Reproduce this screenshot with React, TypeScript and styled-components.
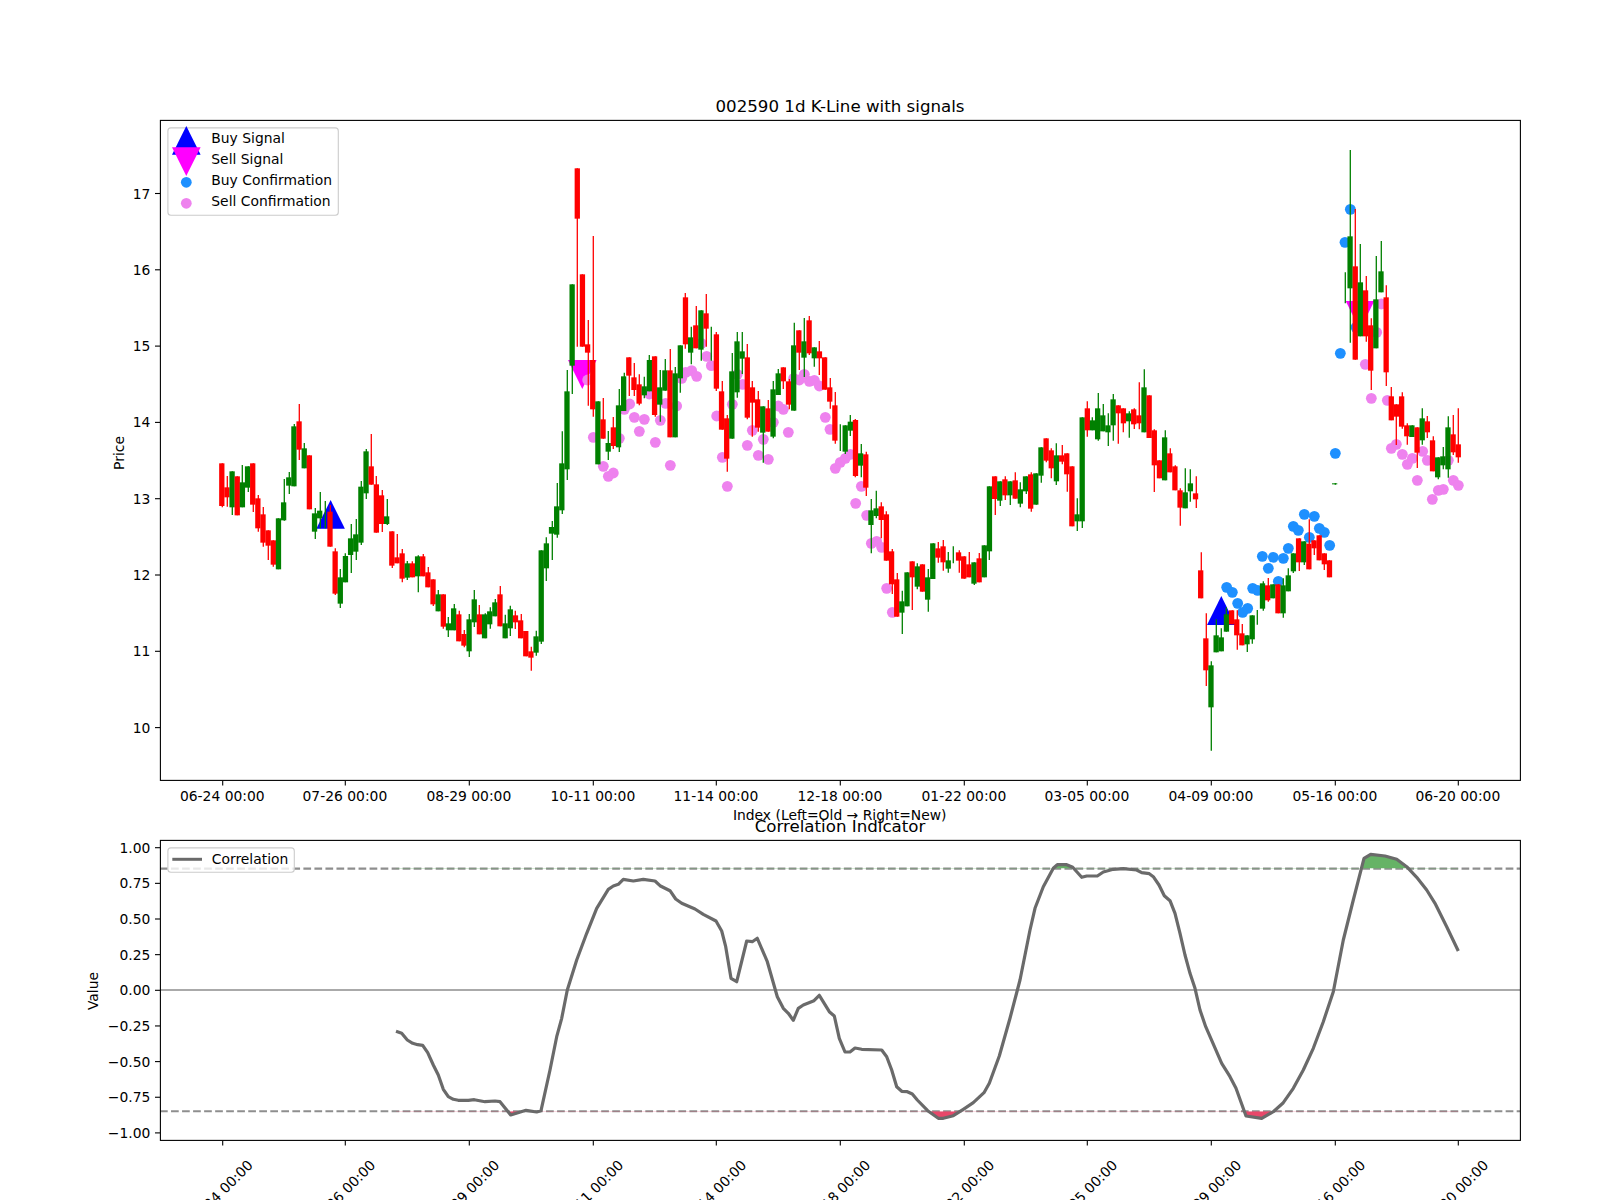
import styled, { createGlobalStyle } from "styled-components";

type Candle = { up: boolean; wt: number; bt: number; bb: number; wb: number };
type Row = [boolean, number, number, number, number];
type Pt = [number, number];

const GlobalStyle = createGlobalStyle`
  html, body {
    margin: 0;
    padding: 0;
    background: #ffffff;
    overflow: hidden;
  }
`;

const Page = styled.div`
  width: 1600px;
  height: 1200px;
  background: #ffffff;
`;

const Figure = styled.svg`
  display: block;
  width: 1600px;
  height: 1200px;
  font-family: "DejaVu Sans", "Liberation Sans", sans-serif;
`;

const Spine = styled.rect`
  fill: none;
  stroke: #000000;
  stroke-width: 1.1;
`;

const Tick = styled.line`
  stroke: #000000;
  stroke-width: 1.1;
`;

const TickLabel = styled.text<{ $anchor?: string }>`
  font-size: 13.89px;
  fill: #000000;
  text-anchor: ${(p) => p.$anchor ?? "middle"};
`;

const RotatedLabel = styled.text`
  font-size: 13.89px;
  fill: #000000;
  text-anchor: middle;
  dominant-baseline: central;
`;

const AxisLabel = styled.text`
  font-size: 13.89px;
  fill: #000000;
  text-anchor: middle;
`;

const Title = styled.text`
  font-size: 16.67px;
  fill: #000000;
  text-anchor: middle;
`;

const Wick = styled.line<{ $up: boolean }>`
  stroke: ${(p) => (p.$up ? "#008000" : "#ff0000")};
  stroke-width: 1.3;
`;

const Body = styled.rect<{ $up: boolean }>`
  fill: ${(p) => (p.$up ? "#008000" : "#ff0000")};
`;

const Marker = styled.polygon<{ $color: string }>`
  fill: ${(p) => p.$color};
`;

const Dot = styled.circle<{ $color: string }>`
  fill: ${(p) => p.$color};
`;

const LegendBox = styled.rect`
  fill: rgba(255, 255, 255, 0.8);
  stroke: #cccccc;
  stroke-width: 1.1;
`;

const LegendText = styled.text`
  font-size: 13.89px;
  fill: #000000;
`;

const RefLine = styled.line<{ $dashed?: boolean }>`
  stroke: ${(p) => (p.$dashed ? "#8e8e8e" : "#aaaaaa")};
  stroke-width: 2.08;
  stroke-dasharray: ${(p) => (p.$dashed ? "7.7 3.33" : "none")};
`;

const CorrelationLine = styled.polyline`
  fill: none;
  stroke: #6a6a6a;
  stroke-width: 3.2;
  stroke-linejoin: round;
`;

const LegendSample = styled.line`
  stroke: #6a6a6a;
  stroke-width: 3;
`;

const Fill = styled.polygon<{ $color: string }>`
  fill: ${(p) => p.$color};
`;

const R = (wt: number, bt: number, bb: number, wb: number): Row => [false, wt, bt, bb, wb];
const G = (wt: number, bt: number, bb: number, wb: number): Row => [true, wt, bt, bb, wb];

// price data is kept as read from the chart: y0 + value / 3 gives the pixel row
const sections: { from: number; y0: number; rows: Row[] }[] = [
  {
    from: 0,
    y0: 400,
    rows: [
      R(190, 190, 318, 322), R(228, 262, 292, 320), G(214, 214, 322, 345), R(229, 229, 346, 346),
      G(195, 247, 322, 322), G(199, 199, 263, 276), R(190, 190, 314, 336), R(285, 295, 385, 395),
      R(321, 343, 428, 440), R(391, 391, 437, 480), R(421, 421, 494, 500), G(355, 355, 508, 508),
      G(237, 307, 361, 362), G(216, 232, 257, 282), G(72, 79, 259, 259), R(12, 64, 149, 180),
      G(129, 145, 205, 205), R(166, 166, 328, 328), G(324, 340, 395, 417), G(276, 332, 355, 385),
      G(303, 345, 345, 385), R(315, 335, 440, 440), R(445, 454, 581, 585), G(507, 532, 611, 624),
      G(460, 468, 547, 547), G(372, 415, 465, 519), G(357, 403, 455, 480), G(243, 260, 428, 435),
      G(147, 154, 280, 297), R(102, 199, 254, 254), R(228, 253, 398, 398), R(270, 286, 372, 396),
      G(297, 349, 372, 375), R(394, 394, 497, 504), R(402, 472, 490, 490), R(447, 460, 536, 547),
      G(483, 490, 533, 540), R(484, 490, 532, 532), G(466, 469, 529, 577), R(462, 469, 529, 529),
      R(501, 517, 562, 562), R(538, 538, 613, 618), G(570, 583, 634, 634), R(583, 583, 680, 686),
      G(651, 670, 691, 711), G(612, 625, 691, 691), R(632, 643, 724, 724), R(690, 702, 737, 742),
      G(642, 658, 754, 771), G(570, 598, 667, 681), R(615, 643, 703, 703), G(640, 643, 715, 715),
      G(622, 634, 673, 686), G(597, 607, 649, 649), R(558, 583, 679, 679), G(644, 670, 715, 715),
      G(617, 628, 685, 708), R(632, 646, 667, 687), R(642, 661, 715, 715), R(693, 693, 769, 769),
      R(740, 754, 773, 812), G(692, 709, 758, 767), G(451, 451, 725, 732), G(412, 430, 505, 543),
      G(363, 381, 401, 480), G(249, 319, 404, 413), G(94, 190, 331, 342),
    ],
  },
  {
    from: 67,
    y0: 130,
    rows: [
      G(720, 784, 1018, 1050), G(463, 463, 707, 792), R(115, 115, 266, 650), R(433, 433, 650, 650),
      R(570, 643, 668, 827), R(318, 690, 838, 860), G(814, 814, 1003, 1003), R(804, 868, 926, 926),
      G(903, 939, 965, 990), R(861, 892, 948, 957), G(777, 826, 952, 966), G(728, 739, 843, 843),
      R(682, 682, 737, 798), R(699, 742, 780, 798), R(733, 763, 821, 826), G(740, 769, 796, 805),
      G(675, 690, 784, 784), R(679, 679, 855, 860), G(720, 772, 824, 875), G(687, 721, 782, 782),
      R(657, 721, 922, 922), G(711, 730, 922, 922), G(646, 646, 745, 788), R(489, 502, 643, 656),
      G(590, 622, 668, 703), R(528, 586, 655, 655), G(541, 541, 659, 692), R(492, 550, 596, 650),
      G(590, 641, 641, 692), R(606, 613, 776, 783), R(753, 784, 899, 899), R(855, 865, 986, 1025),
      G(669, 724, 926, 926), G(606, 634, 787, 803), G(606, 664, 686, 732), R(642, 682, 863, 868),
      R(753, 772, 818, 920), R(783, 808, 893, 905), G(829, 829, 908, 998), R(810, 835, 905, 905),
      G(753, 778, 920, 925), G(717, 730, 795, 795), R(712, 712, 754, 777), R(747, 754, 824, 838),
      G(578, 646, 842, 842), R(601, 601, 668, 720), G(564, 634, 683, 741), R(558, 571, 670, 675),
      G(652, 652, 685, 710), R(633, 664, 685, 735), R(682, 682, 779, 779), R(744, 772, 815, 836),
      R(786, 826, 932, 941), G(883, 920, 920, 963), G(886, 886, 965, 972), G(855, 875, 902, 918),
      R(867, 870, 1038, 1042),
    ],
  },
  {
    from: 124,
    y0: 400,
    rows: [
      G(132, 160, 197, 232), R(155, 163, 263, 288), G(297, 331, 375, 460), G(272, 325, 348, 355),
      R(307, 319, 360, 415), R(334, 343, 482, 482), R(447, 454, 553, 582), R(519, 538, 650, 650),
      G(572, 604, 638, 702),
    ],
  },
  {
    from: 133,
    y0: 370,
    rows: [
      G(607, 607, 709, 709), R(574, 574, 622, 720), G(580, 589, 650, 658), R(583, 583, 665, 665),
      G(597, 622, 689, 725), G(520, 520, 627, 627), R(516, 535, 563, 578), R(510, 529, 577, 602),
      G(546, 571, 596, 608), G(529, 555, 555, 580), R(541, 547, 572, 608), R(559, 559, 626, 626),
      R(546, 583, 622, 622), G(577, 577, 641, 645), R(549, 565, 637, 637), G(526, 526, 622, 622),
      G(349, 349, 544, 570), R(319, 319, 387, 435), G(334, 334, 392, 408), R(319, 328, 376, 390),
      G(334, 334, 376, 405), R(307, 331, 386, 386), G(337, 358, 401, 412), G(319, 319, 364, 372),
      R(307, 313, 416, 425), G(310, 310, 404, 404), G(232, 232, 317, 338), R(205, 205, 272, 277),
      R(235, 241, 295, 325), G(220, 256, 334, 345), R(225, 256, 275, 283), R(250, 250, 313, 365),
      R(289, 289, 469, 469), G(385, 433, 454, 483), G(142, 142, 454, 474), R(94, 115, 181, 200),
      G(142, 151, 181, 181), G(69, 115, 208, 212), G(102, 136, 184, 184), G(130, 166, 187, 228),
      G(72, 88, 166, 212), R(106, 106, 130, 221), R(115, 115, 160, 187), G(124, 130, 154, 203),
      R(115, 118, 163, 177), R(37, 136, 160, 178), G(-2, 52, 187, 187), R(76, 76, 204, 204),
      R(178, 181, 286, 366), R(271, 271, 325, 325), G(181, 202, 331, 331), R(235, 250, 307, 307),
      R(286, 289, 361, 361), R(355, 361, 413, 467),
    ],
  },
  {
    from: 187,
    y0: 400,
    rows: [
      G(205, 277, 325, 325), G(208, 250, 274, 305), R(229, 280, 298, 324), R(457, 511, 595, 595),
      R(640, 715, 811, 858), G(784, 796, 922, 1052), G(658, 706, 757, 757), G(685, 712, 754, 754),
      G(622, 643, 695, 695), R(631, 631, 673, 673), R(631, 658, 706, 749), R(672, 700, 736, 736),
      G(706, 706, 733, 756), G(646, 646, 718, 731), G(630, 652, 652, 674), G(544, 550, 626, 632),
      R(534, 556, 601, 605), G(553, 553, 595, 595), R(553, 553, 640, 640), G(535, 556, 640, 653),
      G(505, 526, 574, 574), G(460, 460, 514, 519), R(415, 415, 487, 513), G(424, 424, 487, 495),
      R(358, 431, 508, 508), R(421, 421, 445, 465), R(406, 406, 481, 481), R(460, 460, 493, 510),
      R(481, 481, 532, 532), G(249, 250, 253, 254),
    ],
  },
  {
    from: 218,
    y0: 130,
    rows: [
      G(427, 470, 470, 520), G(60, 319, 475, 638), R(237, 409, 689, 689), G(342, 457, 619, 619),
      R(438, 481, 619, 635), R(565, 586, 722, 780), G(378, 508, 655, 655), G(333, 424, 487, 487),
      R(466, 502, 727, 768), R(771, 799, 871, 871), R(823, 823, 860, 945), R(787, 799, 890, 896),
    ],
  },
  {
    from: 230,
    y0: 400,
    rows: [
      R(70, 76, 109, 134), G(76, 76, 111, 111), R(82, 82, 158, 204), G(25, 55, 121, 134),
      R(48, 64, 97, 114), R(109, 121, 214, 214), G(172, 172, 232, 238), G(141, 169, 196, 208),
      G(49, 82, 208, 233), R(45, 103, 157, 165), R(25, 133, 172, 188),
    ],
  },
];

const candleX = (i: number) => 221.8 + 5.152 * i;

const candles: (Candle & { i: number })[] = sections.flatMap((s) =>
  s.rows.map(([up, wt, bt, bb, wb], k) => ({
    i: s.from + k,
    up,
    wt: s.y0 + wt / 3,
    bt: s.y0 + bt / 3,
    bb: s.y0 + bb / 3,
    wb: s.y0 + wb / 3,
  })),
);

const place = (ox: number, oy: number, pts: Pt[]): Pt[] =>
  pts.map(([x, y]) => [ox + x / 3, oy + y / 3]);

const sellDots: Pt[] = [
  ...place(500, 130, [
    [263, 750], [448, 792], [545, 745], [557, 727], [575, 722], [590, 739], [620, 679], [634, 707],
    [604, 640], [712, 733], [728, 763], [881, 745], [898, 750], [913, 733], [928, 754], [943, 751],
    [958, 768],
  ]),
  ...place(500, 400, [
    [280, 112], [310, 199], [325, 229], [340, 219], [358, 115], [373, 28], [389, 12], [403, 52],
    [433, 58], [418, 94], [481, 61], [466, 127], [497, 10], [530, 18], [511, 196], [650, 48],
    [667, 172], [697, 13], [682, 259], [742, 136], [757, 91], [775, 166], [790, 118], [805, 178],
    [820, 67], [835, 18], [850, 28], [865, 97], [976, 52], [990, 88], [1006, 205], [1021, 187],
    [1036, 175], [1051, 163], [1084, 259], [1067, 310], [1100, 346], [1114, 430], [1130, 424],
    [1145, 442], [1160, 565], [1177, 637],
  ]),
  ...place(1180, 130, [[604, 522], [590, 607], [556, 703], [574, 805], [622, 811]]),
  ...place(1180, 400, [
    [634, 145], [649, 133], [667, 163], [682, 193], [697, 175], [712, 241], [728, 154], [742, 181],
    [757, 298], [775, 271], [790, 268], [805, 181], [820, 241], [835, 256],
  ]),
];

const buyDots: Pt[] = [
  ...place(1180, 400, [
    [140, 562], [157, 577], [173, 610], [188, 637], [203, 625], [218, 565], [233, 571], [247, 469],
    [265, 505], [280, 472], [295, 544], [310, 475], [325, 445], [340, 379], [355, 391], [373, 343],
    [388, 412], [403, 349], [418, 385], [433, 397], [449, 436], [466, 160],
  ]),
  ...place(1180, 130, [[511, 238], [495, 337], [481, 670], [528, 592]]),
];

const correlation: Pt[] = [
  ...place(60, 770, [
    [1008, 784], [1025, 790], [1042, 810], [1058, 820], [1073, 824], [1088, 826], [1103, 848],
    [1120, 885], [1135, 915], [1150, 958], [1165, 980], [1180, 988], [1195, 991], [1225, 991],
    [1243, 989], [1275, 995], [1305, 993], [1320, 995], [1352, 1035], [1398, 1021], [1430, 1026],
    [1443, 1022], [1470, 900], [1490, 800],
  ]),
  ...place(560, 770, [
    [5, 745], [22, 660], [50, 570], [80, 490], [110, 415], [145, 358], [160, 348], [175, 343],
    [190, 328], [220, 333], [250, 328], [285, 333], [300, 347], [330, 362], [347, 387], [365, 400],
    [405, 417], [430, 433], [468, 453], [485, 483], [497, 530], [513, 625], [530, 635], [560, 513],
    [577, 515], [592, 505], [622, 575], [652, 680], [670, 715], [685, 730], [700, 751], [715, 715],
    [730, 705], [762, 692], [778, 676], [808, 725], [823, 738], [838, 805], [855, 846], [870, 846],
    [885, 834], [905, 838], [965, 840], [980, 860], [995, 900], [1010, 950], [1025, 964],
    [1042, 965], [1057, 972], [1072, 990], [1103, 1022], [1135, 1045], [1150, 1045], [1180, 1037],
    [1210, 1018], [1240, 998], [1272, 968], [1288, 940], [1318, 858], [1350, 745], [1380, 630],
    [1410, 480], [1425, 415], [1450, 350], [1480, 295], [1492, 284],
  ]),
  ...place(1060, 770, [
    [20, 284], [38, 292], [65, 322], [80, 318], [112, 318], [130, 306], [160, 298], [190, 296],
    [230, 300], [245, 308], [268, 311], [280, 320], [297, 345], [313, 377], [330, 392], [345, 430],
    [360, 490], [375, 555], [390, 610], [405, 655], [420, 720], [437, 770], [485, 880], [510, 920],
    [528, 955], [558, 1038], [605, 1045], [640, 1025], [670, 998], [700, 955], [730, 900],
    [760, 835], [790, 755], [820, 665], [850, 510], [880, 390], [912, 265], [932, 253], [975, 258],
    [1010, 268], [1040, 290], [1070, 322], [1100, 360], [1125, 400], [1160, 470], [1195, 543],
  ]),
];

const xTicks: [number, string][] = [
  [222.7, "06-24 00:00"],
  [345.3, "07-26 00:00"],
  [469.3, "08-29 00:00"],
  [593.3, "10-11 00:00"],
  [716.3, "11-14 00:00"],
  [840.3, "12-18 00:00"],
  [964.3, "01-22 00:00"],
  [1087.3, "03-05 00:00"],
  [1211.3, "04-09 00:00"],
  [1335.3, "05-16 00:00"],
  [1458.3, "06-20 00:00"],
];

const priceTicks = [17, 16, 15, 14, 13, 12, 11, 10];
const priceY = (p: number) => 498.7 - (p - 13) * 76.3;

const valueTicks = ["1.00", "0.75", "0.50", "0.25", "0.00", "−0.25", "−0.50", "−0.75", "−1.00"];
const valueY = (k: number) => 847.7 + k * 35.65;

const tri = (x: number, base: number, apex: number, half = 14.3) =>
  `${x - half},${base} ${x + half},${base} ${x},${apex}`;

const pts = (list: Pt[]) => list.map(([x, y]) => `${x.toFixed(1)},${y.toFixed(1)}`).join(" ");

const UPPER = 868.6;
const LOWER = 1111.2;
const DOT_R = 5.4;
const first = correlation[0][0];
const last = correlation[correlation.length - 1][0];

function CandleMark({ c }: { c: Candle & { i: number } }) {
  const x = candleX(c.i);
  const wickX = Math.round(x) + 0.3;
  return (
    <g>
      <Wick $up={c.up} x1={wickX} x2={wickX} y1={c.wt} y2={c.wb} />
      {c.bb > c.bt && <Body $up={c.up} x={x - 2.65} y={c.bt} width={5.3} height={c.bb - c.bt} />}
    </g>
  );
}

export default function App() {
  return (
    <Page>
      <GlobalStyle />
      <Figure viewBox="0 0 1600 1200">
        <defs>
          <clipPath id="above">
            <rect x="160" y="840" width="1360" height={UPPER - 840} />
          </clipPath>
          <clipPath id="below">
            <rect x="160" y={LOWER} width="1360" height={1140 - LOWER} />
          </clipPath>
        </defs>

        <Title x={840} y={112}>002590 1d K-Line with signals</Title>

        <Marker $color="#0000ff" points={tri(330.6, 528.7, 500)} />
        <Marker $color="#0000ff" points={tri(1221.3, 625, 596)} />
        <Marker $color="#ff00ff" points={tri(582.3, 360, 389)} />
        <Marker $color="#ff00ff" points={tri(1360, 301, 330)} />
        {sellDots.map(([x, y], i) => (
          <Dot key={i} $color="#ee82ee" cx={x} cy={y} r={DOT_R} />
        ))}
        {buyDots.map(([x, y], i) => (
          <Dot key={i} $color="#1e90ff" cx={x} cy={y} r={DOT_R} />
        ))}
        {candles.map((c) => (
          <CandleMark key={c.i} c={c} />
        ))}

        <Spine x={160.4} y={120.4} width={1360} height={660} />
        {xTicks.map(([x, label]) => (
          <g key={x}>
            <Tick x1={x} x2={x} y1={781} y2={785.6} />
            <TickLabel x={x - 0.4} y={801}>{label}</TickLabel>
          </g>
        ))}
        {priceTicks.map((p) => (
          <g key={p}>
            <Tick x1={155} x2={160} y1={priceY(p)} y2={priceY(p)} />
            <TickLabel $anchor="end" x={150.4} y={priceY(p) + 5}>{p}</TickLabel>
          </g>
        ))}
        <AxisLabel transform="translate(124 453) rotate(-90)">Price</AxisLabel>
        <AxisLabel x={839.7} y={820}>Index (Left=Old → Right=New)</AxisLabel>

        <LegendBox x={167.9} y={127.9} width={170.4} height={87.4} rx={3} />
        <Marker $color="#0000ff" points={tri(186.3, 154.7, 126)} />
        <Marker $color="#ff00ff" points={tri(186.3, 147.3, 176)} />
        <Dot $color="#1e90ff" cx={186.3} cy={182.3} r={DOT_R} />
        <Dot $color="#ee82ee" cx={186.3} cy={203.3} r={DOT_R} />
        <LegendText x={211.3} y={142.7}>Buy Signal</LegendText>
        <LegendText x={211.3} y={163.7}>Sell Signal</LegendText>
        <LegendText x={211.3} y={184.7}>Buy Confirmation</LegendText>
        <LegendText x={211.3} y={205.7}>Sell Confirmation</LegendText>

        <Title x={840} y={831.7}>Correlation Indicator</Title>
        <RefLine $dashed x1={160} x2={1520} y1={UPPER} y2={UPPER} />
        <RefLine $dashed x1={160} x2={1520} y1={LOWER} y2={LOWER} />
        <RefLine x1={160} x2={1520} y1={990} y2={990} />
        <Fill
          $color="#66b366"
          clipPath="url(#above)"
          points={`${first},${UPPER} ${pts(correlation)} ${last},${UPPER}`}
        />
        <Fill
          $color="#e8486a"
          clipPath="url(#below)"
          points={`${first},${LOWER} ${pts(correlation)} ${last},${LOWER}`}
        />
        <CorrelationLine points={pts(correlation)} />

        <Spine x={160.4} y={840.4} width={1360} height={300} />
        {xTicks.map(([x, label]) => (
          <g key={x}>
            <Tick x1={x} x2={x} y1={1141} y2={1145.6} />
            <RotatedLabel transform={`translate(${x - 2.5} 1192.5) rotate(-45)`}>{label}</RotatedLabel>
          </g>
        ))}
        {valueTicks.map((v, k) => (
          <g key={v}>
            <Tick x1={155} x2={160} y1={valueY(k)} y2={valueY(k)} />
            <TickLabel $anchor="end" x={150.4} y={valueY(k) + 5}>{v}</TickLabel>
          </g>
        ))}
        <AxisLabel transform="translate(98 991) rotate(-90)">Value</AxisLabel>

        <LegendBox x={167.9} y={847.9} width={126.4} height={24.4} rx={3} />
        <LegendSample x1={172.3} x2={202} y1={859.3} y2={859.3} />
        <LegendText x={211.8} y={864}>Correlation</LegendText>
      </Figure>
    </Page>
  );
}
